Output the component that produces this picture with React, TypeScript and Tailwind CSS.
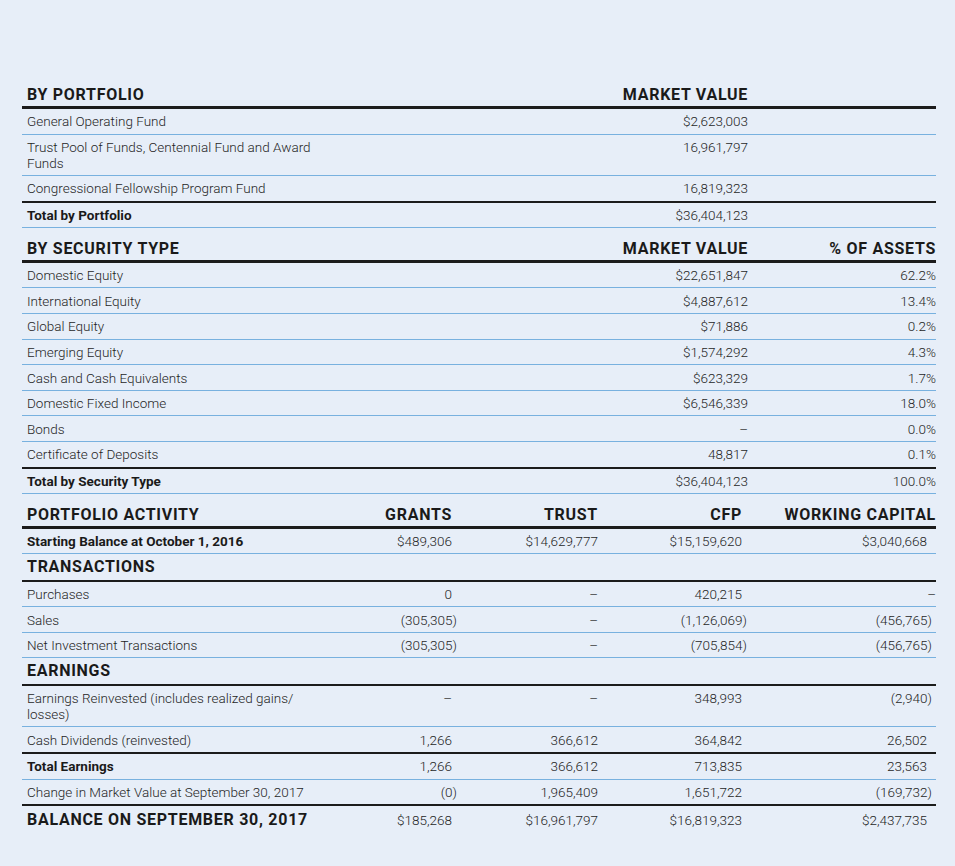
import React from "react";

interface Line {
  label: React.ReactNode;
  values: string[];
  bold?: boolean;
  dark?: boolean;
  tall?: boolean;
}

const colsA = "grid grid-cols-[596px_130px_1fr]";
const colsB = "grid grid-cols-[300px_130px_146px_144px_1fr]";

const portfolio: Line[] = [
  { label: "General Operating Fund", values: ["$2,623,003", ""] },
  {
    label: (
      <>
        Trust Pool of Funds, Centennial Fund and Award
        <br />
        Funds
      </>
    ),
    values: ["16,961,797", ""],
    tall: true,
  },
  { label: "Congressional Fellowship Program Fund", values: ["16,819,323", ""], dark: true },
  { label: "Total by Portfolio", values: ["$36,404,123", ""], bold: true },
];

const security: Line[] = [
  { label: "Domestic Equity", values: ["$22,651,847", "62.2%"] },
  { label: "International Equity", values: ["$4,887,612", "13.4%"] },
  { label: "Global Equity", values: ["$71,886", "0.2%"] },
  { label: "Emerging Equity", values: ["$1,574,292", "4.3%"] },
  { label: "Cash and Cash Equivalents", values: ["$623,329", "1.7%"] },
  { label: "Domestic Fixed Income", values: ["$6,546,339", "18.0%"] },
  { label: "Bonds", values: ["–", "0.0%"] },
  { label: "Certificate of Deposits", values: ["48,817", "0.1%"], dark: true },
  { label: "Total by Security Type", values: ["$36,404,123", "100.0%"], bold: true },
];

const transactions: Line[] = [
  { label: "Purchases", values: ["0", "–", "420,215", "–"] },
  { label: "Sales", values: ["(305,305)", "–", "(1,126,069)", "(456,765)"] },
  { label: "Net Investment Transactions", values: ["(305,305)", "–", "(705,854)", "(456,765)"] },
];

const earnings: Line[] = [
  {
    label: (
      <>
        Earnings Reinvested (includes realized gains/
        <br />
        losses)
      </>
    ),
    values: ["–", "–", "348,993", "(2,940)"],
    tall: true,
  },
  { label: "Cash Dividends (reinvested)", values: ["1,266", "366,612", "364,842", "26,502"], dark: true },
  { label: "Total Earnings", values: ["1,266", "366,612", "713,835", "23,563"], bold: true },
  {
    label: "Change in Market Value at September 30, 2017",
    values: ["(0)", "1,965,409", "1,651,722", "(169,732)"],
    dark: true,
  },
];

function Num({ v, wc }: { v: string; wc?: boolean }) {
  const paren = v.startsWith("(");
  const dash = v === "–";
  let cls = "";
  if (wc && !dash) cls = paren ? "pr-[4px]" : "pr-[9px]";
  else if (paren) cls = "-mr-[5px]";
  return <div className={`text-right whitespace-nowrap ${cls}`}>{v}</div>;
}

function Head({ cols, cells }: { cols: string; cells: string[] }) {
  return (
    <div
      className={`${cols} h-[34.5px] items-end border-b-[3px] border-[#1c1c1c] pb-[3px] text-[16px] leading-[16px] font-bold tracking-[0.045em] text-[#1a1a1a]`}
    >
      {cells.map((c, i) => (
        <div key={i} className={i === 0 ? "pl-[5px]" : "text-right whitespace-nowrap"}>
          {c}
        </div>
      ))}
    </div>
  );
}

function SubHead({ text }: { text: string }) {
  return (
    <div className="flex h-[27.4px] items-center border-b-2 border-[#1c1c1c] pl-[5px] text-[16px] leading-[16px] font-bold tracking-[0.045em] text-[#1a1a1a]">
      {text}
    </div>
  );
}

function Row({ cols, line, wide }: { cols: string; line: Line; wide?: boolean }) {
  return (
    <div
      className={`${cols} items-start py-[4.3px] text-[13.5px] leading-[16px] ${
        line.dark ? "border-b-2 border-[#1c1c1c]" : "border-b border-[#78b1df]"
      }`}
    >
      <div className={`pl-[5px] ${line.bold ? "font-bold text-[#1a1a1a]" : ""}`}>{line.label}</div>
      {line.values.map((v, i) => (
        <Num key={i} v={v} wc={wide && i === line.values.length - 1} />
      ))}
    </div>
  );
}

export default function App() {
  return (
    <div className="min-h-screen w-full bg-[#e7eef8] pt-[74.5px] font-[Roboto,'Liberation_Sans',sans-serif] font-light text-[#1f1f1f]">
      <div className="ml-[22px] w-[914px]">
        <Head cols={colsA} cells={["BY PORTFOLIO", "MARKET VALUE", ""]} />
        {portfolio.map((l, i) => (
          <Row key={i} cols={colsA} line={l} />
        ))}

        <Head cols={colsA} cells={["BY SECURITY TYPE", "MARKET VALUE", "% OF ASSETS"]} />
        {security.map((l, i) => (
          <Row key={i} cols={colsA} line={l} />
        ))}

        <Head cols={colsB} cells={["PORTFOLIO ACTIVITY", "GRANTS", "TRUST", "CFP", "WORKING CAPITAL"]} />
        <Row
          cols={colsB}
          wide
          line={{
            label: "Starting Balance at October 1, 2016",
            values: ["$489,306", "$14,629,777", "$15,159,620", "$3,040,668"],
            bold: true,
          }}
        />

        <SubHead text="TRANSACTIONS" />
        {transactions.map((l, i) => (
          <Row key={i} cols={colsB} line={l} wide />
        ))}

        <SubHead text="EARNINGS" />
        {earnings.map((l, i) => (
          <Row key={i} cols={colsB} line={l} wide />
        ))}

        <div className={`${colsB} h-[27px] items-center text-[13.5px] leading-[16px]`}>
          <div className="pl-[5px] whitespace-nowrap text-[16px] font-bold tracking-[0.045em] text-[#1a1a1a]">
            BALANCE ON SEPTEMBER 30, 2017
          </div>
          <Num v="$185,268" />
          <Num v="$16,961,797" />
          <Num v="$16,819,323" />
          <Num v="$2,437,735" wc />
        </div>
      </div>
    </div>
  );
}
